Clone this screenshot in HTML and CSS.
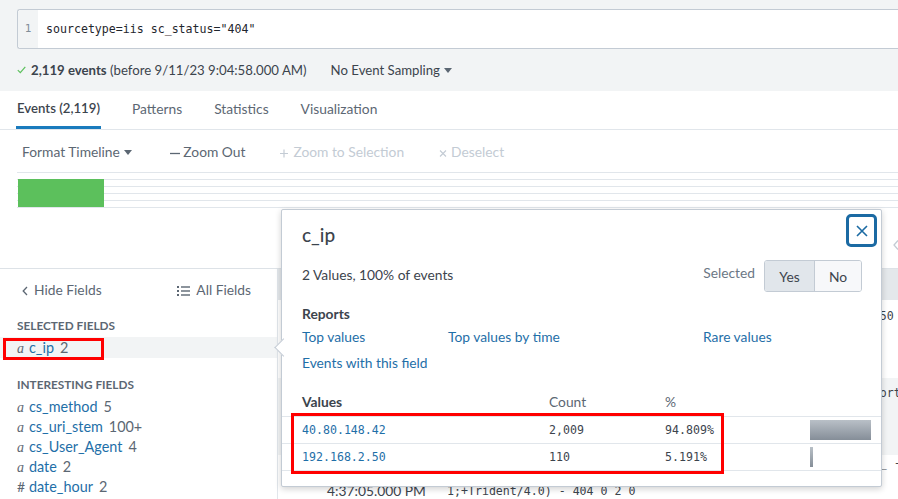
FILE: index.html
```html
<!DOCTYPE html>
<html>
<head>
<meta charset="utf-8">
<link rel="stylesheet" href="styles.css">
</head>
<body>
<div class="top">
  <div class="search">
    <div class="gutter">1</div>
    <div class="query">sourcetype=iis sc_status="404"</div>
  </div>
  <div class="status">
    <svg class="check" width="9" height="8" viewBox="0 0 9 8"><path d="M0.8 4.2 L3.3 6.7 L8.3 0.8" fill="none" stroke="#5cc05c" stroke-width="1.2"/></svg>
    <span><b>2,119 events</b> (before 9/11/23 9:04:58.000 AM)</span>
    <span class="sampling">No Event Sampling <svg class="caret" width="8" height="5" viewBox="0 0 8 5"><path d="M0 0 H8 L4 5 Z" fill="#5c6773"/></svg></span>
  </div>
</div>

<nav class="tabs">
  <span class="tab active">Events (2,119)</span>
  <span class="tab">Patterns</span>
  <span class="tab">Statistics</span>
  <span class="tab">Visualization</span>
</nav>

<div class="toolbar">
  <span class="tool tool-first">Format Timeline <svg class="caret" width="8" height="5" viewBox="0 0 8 5"><path d="M0 0 H8 L4 5 Z" fill="#5c6773"/></svg></span>
  <span class="tool"><svg class="sym" width="10" height="10" viewBox="0 0 10 10"><path d="M0 5.5 H10" stroke="currentColor" stroke-width="1.3"/></svg>Zoom Out</span>
  <span class="tool disabled"><svg class="sym plus" width="8" height="10" viewBox="0 0 8 10"><path d="M0 5.5 H8 M4 1.5 V9.5" stroke="currentColor" stroke-width="1.2"/></svg>Zoom to Selection</span>
  <span class="tool disabled"><svg class="sym times" width="8" height="10" viewBox="0 0 8 10"><path d="M1 2.5 L7 8.5 M7 2.5 L1 8.5" stroke="currentColor" stroke-width="1.1"/></svg>Deselect</span>
</div>

<div class="timeline"><div class="bar"></div></div>

<div class="pager">
  <svg width="6" height="10" viewBox="0 0 6 10"><path d="M5 0.5 L1 5 L5 9.5" fill="none" stroke="#c3cbd4" stroke-width="1.3"/></svg>
</div>

<div class="main">
  <aside class="sidebar">
    <div class="side-head">
      <span class="side-link"><svg width="6" height="10" viewBox="0 0 6 10"><path d="M5 1 L1.2 5 L5 9" fill="none" stroke="#5c6773" stroke-width="1.3"/></svg>Hide Fields</span>
      <span class="side-link"><svg width="13" height="10" viewBox="0 0 13 10"><rect x="0" y="0" width="2" height="2" fill="#5c6773"/><rect x="0" y="4" width="2" height="2" fill="#5c6773"/><rect x="0" y="8" width="2" height="2" fill="#5c6773"/><rect x="4" y="0.3" width="9" height="1.4" fill="#5c6773"/><rect x="4" y="4.3" width="9" height="1.4" fill="#5c6773"/><rect x="4" y="8.3" width="9" height="1.4" fill="#5c6773"/></svg>All Fields</span>
    </div>
    <div class="sec-title first">Selected Fields</div>
    <div class="field selected"><span class="ftype">a</span><span class="fname">c_ip</span><span class="fcount">2</span></div>
    <div class="sec-title second">Interesting Fields</div>
    <div class="field"><span class="ftype">a</span><span class="fname">cs_method</span><span class="fcount">5</span></div>
    <div class="field"><span class="ftype">a</span><span class="fname">cs_uri_stem</span><span class="fcount">100+</span></div>
    <div class="field"><span class="ftype">a</span><span class="fname">cs_User_Agent</span><span class="fcount">4</span></div>
    <div class="field"><span class="ftype">a</span><span class="fname">date</span><span class="fcount">2</span></div>
    <div class="field"><span class="ftype num">#</span><span class="fname">date_hour</span><span class="fcount">2</span></div>
  </aside>

  <section class="events">
    <div class="ev-head"></div>
    <div class="ev-row r1">
      <div class="ev-exp"></div>
      <div class="ev-time"></div>
      <div class="ev-raw">2023-09-10 16:37:05 W3SVC1 192.168.250.70 GET /a 80 192.168.2.50 Mozilla/4.0+(compatible;+MSIE+8.0)</div>
    </div>
    <div class="ev-row r2">
      <div class="ev-exp"></div>
      <div class="ev-time"></div>
      <div class="ev-raw">2023-09-10 16:37:05 W3SVC1 192.168.250.70 GET /joomla/libs/Report.php - 80 -</div>
    </div>
    <div class="ev-row r3">
      <div class="ev-exp"></div>
      <div class="ev-time">9/10/23<br>4:37:05.000 PM</div>
      <div class="ev-raw">2023-09-10 16:37:05 W3SVC1 192.168.250.70 GET /joomla/xab.php _ - 80<br>192.168.2.50 Mozilla/4.0+(compatible;+MSIE+7.0;+Windows+NT+6.<br>1;+Trident/4.0) - 404 0 2 0</div>
    </div>
  </section>
</div>

<div class="mark mark-field"></div>

<div class="popup">
  <div class="pop-arrow"></div>
  <div class="pop-head">
    <div class="pop-title">c_ip</div>
    <button class="pop-close"><svg width="12" height="12" viewBox="0 0 12 12"><path d="M1 1 L11 11 M11 1 L1 11" stroke="#1b6aa3" stroke-width="1.6"/></svg></button>
  </div>
  <div class="pop-info">
    <span class="pop-summary">2 Values, 100% of events</span>
    <span class="pop-sel-label">Selected</span>
    <div class="seg">
      <span class="seg-btn on">Yes</span>
      <span class="seg-btn">No</span>
    </div>
  </div>
  <div class="pop-reports">Reports</div>
  <div class="pop-links">
    <span class="link">Top values</span>
    <span class="link">Top values by time</span>
    <span class="link">Rare values</span>
    <span class="link">Events with this field</span>
  </div>
  <div class="vtable">
    <div class="vrow vhead">
      <span class="vcell vval"><b>Values</b></span>
      <span class="vcell">Count</span>
      <span class="vcell">%</span>
      <span class="vcell"></span>
    </div>
    <div class="vrow">
      <span class="vcell vval mono link">40.80.148.42</span>
      <span class="vcell mono">2,009</span>
      <span class="vcell mono">94.809%</span>
      <span class="vcell"><span class="pbar" style="width:61px"></span></span>
    </div>
    <div class="vrow">
      <span class="vcell vval mono link">192.168.2.50</span>
      <span class="vcell mono">110</span>
      <span class="vcell mono">5.191%</span>
      <span class="vcell"><span class="pbar" style="width:3px"></span></span>
    </div>
  </div>
  <div class="mark mark-table"></div>
</div>
</body>
</html>
```

FILE: styles.css
```css
* { box-sizing: border-box; }

body {
  margin: 0;
  width: 898px;
  height: 499px;
  overflow: hidden;
  position: relative;
  background: #fff;
  color: #3c444d;
  font-family: Lato, "Open Sans", "Liberation Sans", sans-serif;
  font-size: 13.8px;
}

.mono {
  font-family: "DejaVu Sans Mono", "Liberation Mono", monospace;
  font-size: 11.6px;
}

/* top search area */
.top {
  background: #f2f4f5;
  height: 91px;
  padding: 9px 0 0 17px;
}
.search {
  display: flex;
  height: 40px;
  border: 1px solid #c3cbd4;
  border-right: none;
  border-radius: 3px 0 0 3px;
  background: #fff;
}
.gutter {
  width: 20px;
  background: #f2f4f5;
  color: #818d99;
  text-align: center;
  font-family: "DejaVu Sans Mono", monospace;
  font-size: 11px;
  line-height: 38px;
  border-radius: 3px 0 0 3px;
}
.query {
  padding-left: 8px;
  font-family: "DejaVu Sans Mono", "Liberation Mono", monospace;
  font-size: 11.6px;
  line-height: 38px;
  color: #1f262d;
}
.status {
  height: 42px;
  display: flex;
  align-items: center;
  font-size: 13.2px;
}
.check { margin-right: 5px; }
.status b { font-weight: 700; }
.sampling { margin-left: 24px; }
.caret { vertical-align: 2px; margin-left: 1px; }

/* tabs */
.tabs {
  display: flex;
  gap: 30px;
  height: 39px;
  padding-left: 16px;
  border-bottom: 1px solid #e1e6eb;
}
.tab {
  padding: 0 1px;
  line-height: 35px;
  border-bottom: 3px solid transparent;
  color: #5c6773;
}
.tab.active {
  color: #3c444d;
  font-weight: 600;
  font-size: 13.2px;
  border-bottom-color: #1a7bbd;
}

/* toolbar */
.toolbar {
  height: 42px;
  display: flex;
  align-items: center;
  padding-left: 22px;
  gap: 35px;
  color: #5c6773;
}
.tool-first { margin-right: 3px; }
.tool.disabled { color: #c3cbd4; }
.sym { margin-right: 3px; vertical-align: -1px; }
.sym.plus { margin-right: 5px; }
.sym.times { margin-right: 4px; }

/* timeline */
.timeline {
  margin-left: 17px;
  height: 36px;
  padding-top: 7px;
  background: repeating-linear-gradient(to bottom, #e1e6eb 0 1px, transparent 1px 7px);
}
.bar {
  margin-left: 1px;
  width: 86px;
  height: 28px;
  background: #5cc05c;
}

.pager {
  height: 60px;
  display: flex;
  justify-content: flex-end;
  align-items: flex-start;
  padding-top: 32px;
  margin-right: -1px;
}

/* main */
.main {
  display: flex;
  border-top: 1px solid #dde2e7;
  height: 231px;
}
.sidebar {
  width: 278px;
  flex: none;
  border-right: 1px solid #e1e6eb;
}
.side-head {
  height: 41px;
  display: flex;
  align-items: center;
  justify-content: space-between;
  padding: 0 26px 0 22px;
  color: #5c6773;
}
.side-link svg { margin-right: 6px; vertical-align: -1px; }
.sec-title {
  padding-left: 17px;
  font-size: 11.8px;
  font-weight: 700;
  text-transform: uppercase;
  color: #5c6773;
  line-height: 20px;
}
.sec-title.first { margin-top: 6px; }
.sec-title.second { margin-top: 17px; margin-bottom: 2px; }
.field {
  height: 20px;
  line-height: 20px;
  padding-left: 17px;
  white-space: nowrap;
  font-size: 14.4px;
}
.field.selected {
  height: 21px;
  line-height: 21px;
  margin-top: 1px;
  background: #f2f4f5;
}
.ftype {
  display: inline-block;
  width: 12px;
  font-family: "Liberation Serif", serif;
  font-style: italic;
  font-size: 14px;
  color: #5c6773;
}
.ftype.num {
  font-family: Lato, sans-serif;
  font-style: normal;
  font-size: 14px;
}
.fname { color: #1f6fa8; }
.fcount { margin-left: 6px; color: #5c6773; }

/* events behind popup */
.events {
  flex: 1;
  min-width: 0;
  overflow: hidden;
}
.ev-head {
  height: 31px;
  background: #e4e8eb;
}
.ev-row {
  display: flex;
  white-space: nowrap;
}
.ev-row.r1 { height: 78px; }
.ev-row.r2 { height: 77px; background: #f2f4f5; }
.ev-exp { width: 49px; flex: none; }
.ev-time {
  width: 120px;
  flex: none;
  line-height: 14px;
  padding-top: 15px;
}
.ev-raw {
  font-family: "DejaVu Sans Mono", "Liberation Mono", monospace;
  font-size: 11.6px;
  line-height: 14px;
}
.r1 .ev-raw { padding-top: 9px; }
.r2 .ev-raw { padding-top: 8px; }
.r3 .ev-raw { padding-top: 1px; }

/* annotation marks */
.mark {
  position: absolute;
  border: 3px solid #ff0000;
  pointer-events: none;
}
.mark-field {
  left: 3px;
  top: 338px;
  width: 101px;
  height: 22px;
}

/* popup */
.popup {
  position: absolute;
  left: 281px;
  top: 209px;
  width: 601px;
  height: 278px;
  background: #fff;
  border: 1px solid #c3cbd4;
  border-radius: 2px;
  box-shadow: 0 2px 6px rgba(0, 0, 0, 0.18);
}
.pop-arrow {
  position: absolute;
  left: -5px;
  top: 131px;
  width: 13px;
  height: 13px;
  background: #fff;
  border-left: 1px solid #c3cbd4;
  border-bottom: 1px solid #c3cbd4;
  transform: rotate(45deg);
}
.pop-head {
  display: flex;
  align-items: flex-start;
  padding: 4px 4px 0 20px;
}
.pop-title {
  margin-top: 10px;
  font-size: 19px;
  font-weight: 500;
  line-height: 22px;
  color: #3c444d;
}
.pop-close {
  margin-left: auto;
  width: 31px;
  height: 33px;
  padding: 0;
  border: 3px solid #1b6aa3;
  border-radius: 5px;
  background: #fff;
  display: flex;
  align-items: center;
  justify-content: center;
}
.pop-info {
  display: flex;
  align-items: center;
  margin-top: 13px;
  padding: 0 19px 0 20px;
}
.pop-summary { padding-bottom: 4px; }
.pop-sel-label {
  margin-left: auto;
  margin-right: 9px;
  padding-bottom: 8px;
  color: #6b7785;
}
.seg {
  display: flex;
  height: 32px;
  border: 1px solid #c3cbd4;
  border-radius: 3px;
  overflow: hidden;
}
.seg-btn {
  display: flex;
  align-items: center;
  justify-content: center;
  width: 46px;
  background: #f7f8fa;
  color: #3c444d;
}
.seg-btn.on {
  width: 50px;
  background: #e1e6eb;
  border-right: 1px solid #c3cbd4;
}
.pop-reports {
  margin-top: 12px;
  padding-left: 20px;
  line-height: 20px;
  font-weight: 700;
}
.pop-links {
  display: grid;
  grid-template-columns: 146px 255px 1fr;
  row-gap: 6px;
  margin-top: 3px;
  padding-left: 20px;
  line-height: 20px;
}
.link { color: #1f6fa8; }

.vtable { margin-top: 17px; }
.vrow {
  display: grid;
  grid-template-columns: 267px 116px 145px 1fr;
  height: 27px;
  align-items: center;
  border-bottom: 1px solid #e1e6eb;
}
.vrow.vhead { padding-bottom: 3px; }
.vhead .vcell { color: #5c6773; }
.vhead .vval { color: #3c444d; }
.vval { padding-left: 20px; }
.pbar {
  display: block;
  height: 20px;
  background: linear-gradient(to bottom, #b9c0c7, #858e98);
}
.mark-table {
  left: 9px;
  top: 203px;
  width: 433px;
  height: 61px;
}
```
